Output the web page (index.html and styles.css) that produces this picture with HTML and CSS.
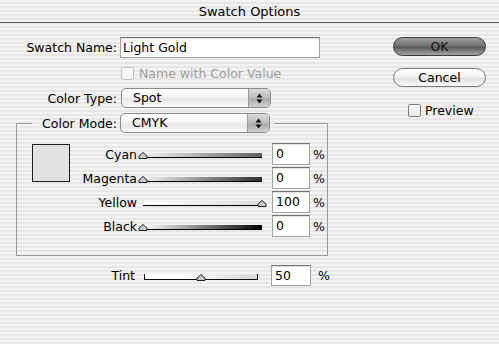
FILE: index.html
```html
<!DOCTYPE html>
<html lang="en">
<head>
    <meta charset="UTF-8">
    <title>Swatch Options</title>
    <link rel="stylesheet" href="styles.css">
</head>
<body>
<div class="titlebar">Swatch Options</div>

<div class="content">
    <div class="main">
        <!-- Name -->
        <div class="row name-row">
            <span class="label">Swatch Name:</span>
            <div class="field name-field">Light Gold</div>
        </div>
        <div class="row check-row disabled">
            <span class="checkbox"></span>
            <span>Name with Color Value</span>
        </div>

        <!-- Color type -->
        <div class="row type-row">
            <span class="label">Color Type:</span>
            <div class="popup">
                <span class="popup-text">Spot</span>
                <span class="popup-arrows">
                    <svg width="7" height="11" viewBox="0 0 7 11"><path d="M0.5 4.5 L3.5 0.5 L6.5 4.5 Z M0.5 6.5 L3.5 10.5 L6.5 6.5 Z" fill="#111"/></svg>
                </span>
            </div>
        </div>

        <!-- Color mode group -->
        <fieldset class="group">
            <legend class="group-legend">
                <span class="legend-label">Color Mode:</span>
                <div class="popup">
                    <span class="popup-text">CMYK</span>
                    <span class="popup-arrows">
                        <svg width="7" height="11" viewBox="0 0 7 11"><path d="M0.5 4.5 L3.5 0.5 L6.5 4.5 Z M0.5 6.5 L3.5 10.5 L6.5 6.5 Z" fill="#111"/></svg>
                    </span>
                </div>
            </legend>
            <div class="group-body">
                <div class="swatch"></div>
                <div class="sliders">
                    <div class="slider-row">
                        <span class="slider-label">Cyan</span>
                        <div class="slider">
                            <div class="track cyan"></div>
                            <svg class="thumb" style="left: 0%" width="11" height="7" viewBox="0 0 11 7"><path d="M5.5 0.5 L9.5 4 L9.5 6.5 L1.5 6.5 L1.5 4 Z" fill="#c8c8c8" stroke="#222"/></svg>
                        </div>
                        <div class="field num">0</div>
                        <span class="pct">%</span>
                    </div>
                    <div class="slider-row">
                        <span class="slider-label">Magenta</span>
                        <div class="slider">
                            <div class="track magenta"></div>
                            <svg class="thumb" style="left: 0%" width="11" height="7" viewBox="0 0 11 7"><path d="M5.5 0.5 L9.5 4 L9.5 6.5 L1.5 6.5 L1.5 4 Z" fill="#c8c8c8" stroke="#222"/></svg>
                        </div>
                        <div class="field num">0</div>
                        <span class="pct">%</span>
                    </div>
                    <div class="slider-row">
                        <span class="slider-label">Yellow</span>
                        <div class="slider">
                            <div class="track yellow"></div>
                            <svg class="thumb" style="left: 100%" width="11" height="7" viewBox="0 0 11 7"><path d="M5.5 0.5 L9.5 4 L9.5 6.5 L1.5 6.5 L1.5 4 Z" fill="#c8c8c8" stroke="#222"/></svg>
                        </div>
                        <div class="field num">100</div>
                        <span class="pct">%</span>
                    </div>
                    <div class="slider-row">
                        <span class="slider-label">Black</span>
                        <div class="slider">
                            <div class="track black"></div>
                            <svg class="thumb" style="left: 0%" width="11" height="7" viewBox="0 0 11 7"><path d="M5.5 0.5 L9.5 4 L9.5 6.5 L1.5 6.5 L1.5 4 Z" fill="#c8c8c8" stroke="#222"/></svg>
                        </div>
                        <div class="field num">0</div>
                        <span class="pct">%</span>
                    </div>
                </div>
            </div>
        </fieldset>

        <!-- Tint -->
        <div class="row tint-row">
            <span class="tint-label">Tint</span>
            <div class="slider tint-slider">
                <div class="tint-track"></div>
                <svg class="thumb" style="left: 50%" width="11" height="7" viewBox="0 0 11 7"><path d="M5.5 0.5 L9.5 4 L9.5 6.5 L1.5 6.5 L1.5 4 Z" fill="#c8c8c8" stroke="#222"/></svg>
            </div>
            <div class="field num tint-num">50</div>
            <span class="pct">%</span>
        </div>
    </div>

    <!-- Buttons -->
    <div class="side">
        <div class="btn btn-default">OK</div>
        <div class="btn">Cancel</div>
        <div class="row preview-row">
            <span class="checkbox"></span>
            <span>Preview</span>
        </div>
    </div>
</div>
</body>
</html>
```

FILE: styles.css
```css
body { margin: 0; width: 499px; height: 344px; overflow: hidden; font-family: "DejaVu Sans", sans-serif; font-size: 12.5px; color: #000; background: repeating-linear-gradient(to bottom, #f3f3f3 0 2px, #e6e6e6 2px 4px); }
.titlebar { height: 22px; line-height: 23px; text-align: center; font-size: 13px; border-bottom: 1px solid #5a5a5a; }
.content { display: flex; }
.main { width: 393px; }
.side { flex: 1; display: flex; flex-direction: column; padding-top: 14px; }

.row { display: flex; align-items: center; }
.label { width: 117px; text-align: right; margin-right: 3px; }
.field { box-sizing: border-box; background: #fff; border: 1px solid #a2a2a2; border-top-color: #707070; box-shadow: inset 0 1px 1px rgba(0,0,0,0.12); }
.name-row { margin-top: 14px; height: 21px; }
.name-field { width: 200px; height: 21px; line-height: 19px; padding-left: 2px; }

.checkbox { box-sizing: border-box; width: 13px; height: 13px; border: 1px solid #7c7c7c; border-radius: 2px; background: linear-gradient(#fff, #e9e9e9); }
.check-row { margin-top: 8px; height: 14px; padding-left: 121px; gap: 5px; }
.disabled { color: #9c9c9c; }
.disabled .checkbox { border-color: #c2c2c2; background: linear-gradient(#fbfbfb, #f0f0f0); }

.type-row { margin-top: 8px; height: 20px; }
.type-row .label { margin-right: 4px; }
.popup { box-sizing: border-box; width: 150px; height: 20px; display: flex; border: 1px solid #8a8a8a; border-radius: 5px; overflow: hidden; background: linear-gradient(#fff, #f4f4f4 45%, #e7e7e7 55%, #f8f8f8); }
.popup-text { flex: 1; padding-left: 11px; line-height: 18px; }
.popup-arrows { width: 21px; display: flex; align-items: center; justify-content: center; border-left: 1px solid #9c9c9c; background: linear-gradient(#dadada, #bcbcbc 48%, #a8a8a8 55%, #d2d2d2); }

.group { box-sizing: border-box; width: 312px; min-width: 0; margin: 5px 0 0 16px; padding: 0 0 17px; border: 1px solid #9a9a9a; }
.group-legend { display: flex; align-items: center; margin-left: 15px; padding: 0 4px 0 5px; }
.legend-label { width: 80px; text-align: right; margin-right: 3px; }
.group-body { display: flex; padding-top: 9px; }
.swatch { box-sizing: border-box; width: 38px; height: 38px; margin: 2px 0 0 15px; border: 1px solid #1e1e1e; background: #e1e1e1; }
.sliders { display: flex; flex-direction: column; }
.slider-row { display: flex; align-items: center; height: 24px; }
.slider-label { width: 67px; text-align: right; margin-right: 6px; }
.slider { position: relative; width: 119px; height: 8px; margin-right: 10px; }
.track { height: 4px; margin-top: 3px; border-bottom: 1px solid #000; }
.track.cyan { background: linear-gradient(to right, #f4f4f4, #5e5e5e); }
.track.magenta { background: linear-gradient(to right, #f4f4f4, #2e2e2e); }
.track.yellow { background: linear-gradient(to right, #fff, #dcdcdc); }
.track.black { background: linear-gradient(to right, #fff, #000); }
.thumb { position: absolute; bottom: -1px; transform: translateX(-50%); }
.num { width: 38px; height: 22px; line-height: 20px; padding-left: 3px; margin-right: 3px; }

.tint-row { margin-top: 9px; height: 21px; }
.tint-label { width: 135px; text-align: right; margin-right: 9px; }
.tint-slider { width: 114px; margin-right: 13px; }
.tint-track { height: 5px; margin-top: 2px; border: 1px solid #111; border-top: 0; background: linear-gradient(to right, #fff 35%, #d6d6d6); }
.tint-num { width: 40px; height: 21px; line-height: 19px; margin-right: 7px; }

.btn { box-sizing: border-box; width: 93px; height: 19px; line-height: 17px; text-align: center; border: 1px solid #7a7a7a; border-radius: 10px; background: linear-gradient(#fff, #f1f1f1 48%, #e0e0e0 55%, #fafafa); }
.btn-default { margin-bottom: 12px; border-color: #3a3a3a; color: #111; background: linear-gradient(#a0a0a0, #707070 45%, #5c5c5c 55%, #a4a4a4); }
.preview-row { margin: 16px 0 0 15px; gap: 4px; }
```
